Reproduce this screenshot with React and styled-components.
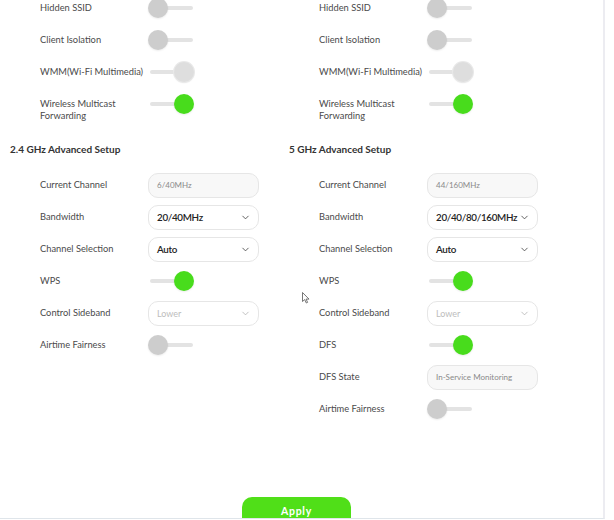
import React from 'react';
import styled, { createGlobalStyle } from 'styled-components';
import { ChevronDown } from 'lucide-react';

const colors = {
  text: '#4a4a4a',
  heading: '#333333',
  border: '#e6e6e6',
  green: '#48dc1c',
  knobOff: '#cdcdcd',
  track: '#e3e3e3',
};

const GlobalStyle = createGlobalStyle`
  body {
    margin: 0;
    background: #ffffff;
    font-family: Lato, "Open Sans", sans-serif;
  }
`;

const Screen = styled.div`
  position: relative;
  width: 614px;
  height: 520px;
  overflow: hidden;
  background: #ffffff;
`;

const Panel = styled.div`
  width: 603px;
  height: 518px;
  border-right: 2px solid #ececf1;
  border-bottom: 1px solid #dfe5ea;
  overflow: hidden;
  display: flex;
  flex-direction: column;
`;

const Columns = styled.div`
  display: grid;
  grid-template-columns: 279px 279px;
  padding-left: 10px;
  margin-top: -4.5px;
`;

const Column = styled.div`
  display: flex;
  flex-direction: column;
  gap: 7px;
`;

const Heading = styled.h3`
  margin: 14px 0 9.5px;
  font-size: 10px;
  line-height: 14px;
  font-weight: 700;
  color: ${colors.heading};
`;

const Row = styled.div`
  display: grid;
  grid-template-columns: 108px 111px;
  align-items: start;
  padding-left: 30px;
`;

const Label = styled.div`
  font-size: 9.3px;
  line-height: 11.5px;
  padding-top: 6.5px;
  color: ${colors.text};
`;

const Control = styled.div`
  height: 25px;
  display: flex;
  align-items: center;
`;

const Field = styled.div`
  box-sizing: border-box;
  width: 111px;
  height: 25px;
  border: 1px solid ${colors.border};
  border-radius: 10px;
  background: ${(p) => (p.readOnly ? '#f8f8f8' : '#ffffff')};
  display: flex;
  align-items: center;
  justify-content: space-between;
  padding: 0 7px 0 8px;
  color: ${(p) => (p.readOnly ? '#8a8a8a' : p.disabled ? '#bdbdbd' : '#222222')};
  font-size: ${(p) => (p.readOnly ? '8px' : p.disabled ? '9px' : '9.8px')};
  font-weight: ${(p) => (p.readOnly || p.disabled ? 400 : 600)};
  letter-spacing: ${(p) => (p.readOnly || p.disabled ? '0' : '-0.3px')};
  white-space: nowrap;
`;

const Chevron = styled(ChevronDown)`
  flex-shrink: 0;
  color: ${(p) => (p.$disabled ? '#b5b5b5' : '#444444')};
`;

const Track = styled.div`
  position: relative;
  width: 46px;
  height: 20px;
  display: flex;
  align-items: center;

  &::before {
    content: '';
    position: absolute;
    left: 2px;
    right: 1px;
    height: 4px;
    border-radius: 2px;
    background: ${colors.track};
  }
`;

const Knob = styled.span`
  position: absolute;
  top: 0;
  left: ${(p) => (p.$on ? '26px' : '0')};
  width: 20px;
  height: 20px;
  border-radius: 50%;
  background: ${(p) => (p.$muted ? '#dedede' : p.$on ? colors.green : colors.knobOff)};
  box-shadow: ${(p) => (p.$muted ? '0 0 0 1px #e9e9e9, 0 1px 2px rgba(0,0,0,0.08)' : '0 1px 2px rgba(0,0,0,0.08)')};
`;

const Footer = styled.div`
  display: flex;
  justify-content: center;
  padding-right: 10px;
  margin-top: 75.5px;
`;

const ApplyButton = styled.button`
  width: 109px;
  height: 30px;
  flex-shrink: 0;
  border: none;
  border-radius: 10px;
  background: #50df18;
  color: #ffffff;
  font-family: Lato, "Open Sans", sans-serif;
  font-size: 10.5px;
  font-weight: 700;
  letter-spacing: 0.7px;
  padding: 0 0 2px;
`;

const Cursor = styled.svg`
  position: absolute;
  left: 302px;
  top: 292px;
`;

const Toggle = ({ on, muted }) => (
  <Track>
    <Knob $on={on} $muted={muted} />
  </Track>
);

const Select = ({ value, disabled }) => (
  <Field disabled={disabled}>
    <span>{value}</span>
    <Chevron size={11} strokeWidth={1.8} $disabled={disabled} />
  </Field>
);

const Setting = ({ label, children }) => (
  <Row>
    <Label>{label}</Label>
    <Control>{children}</Control>
  </Row>
);

const BasicRows = () => (
  <>
    <Setting label="Hidden SSID"><Toggle /></Setting>
    <Setting label="Client Isolation"><Toggle /></Setting>
    <Setting label="WMM(Wi-Fi Multimedia)"><Toggle on muted /></Setting>
    <Setting label={<>Wireless Multicast<br />Forwarding</>}><Toggle on /></Setting>
  </>
);

const App = () => (
  <Screen>
    <GlobalStyle />
    <Panel>
      <Columns>
        <Column>
          <BasicRows />
          <Heading>2.4 GHz Advanced Setup</Heading>
          <Setting label="Current Channel"><Field readOnly>6/40MHz</Field></Setting>
          <Setting label="Bandwidth"><Select value="20/40MHz" /></Setting>
          <Setting label="Channel Selection"><Select value="Auto" /></Setting>
          <Setting label="WPS"><Toggle on /></Setting>
          <Setting label="Control Sideband"><Select value="Lower" disabled /></Setting>
          <Setting label="Airtime Fairness"><Toggle /></Setting>
        </Column>
        <Column>
          <BasicRows />
          <Heading>5 GHz Advanced Setup</Heading>
          <Setting label="Current Channel"><Field readOnly>44/160MHz</Field></Setting>
          <Setting label="Bandwidth"><Select value="20/40/80/160MHz" /></Setting>
          <Setting label="Channel Selection"><Select value="Auto" /></Setting>
          <Setting label="WPS"><Toggle on /></Setting>
          <Setting label="Control Sideband"><Select value="Lower" disabled /></Setting>
          <Setting label="DFS"><Toggle on /></Setting>
          <Setting label="DFS State"><Field readOnly>In-Service Monitoring</Field></Setting>
          <Setting label="Airtime Fairness"><Toggle /></Setting>
        </Column>
      </Columns>
      <Footer>
        <ApplyButton>Apply</ApplyButton>
      </Footer>
    </Panel>
    <Cursor width="8" height="12" viewBox="0 0 8 12">
      <path d="M0.5 0.5 L0.5 9.5 L2.7 7.6 L4.3 11 L5.6 10.4 L4.1 7.1 L7 7.1 Z" fill="#ffffff" stroke="#555555" strokeWidth="0.8" strokeLinejoin="round" />
    </Cursor>
  </Screen>
);

export default App;
